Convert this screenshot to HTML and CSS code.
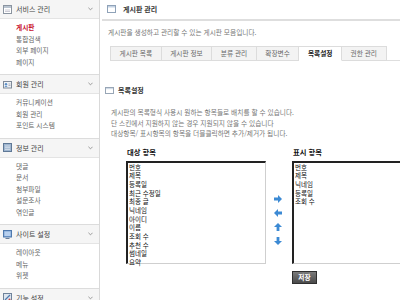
FILE: index.html
```html
<!DOCTYPE html>
<html lang="ko">
<head>
<meta charset="utf-8">
<title>게시판 관리</title>
<link rel="stylesheet" href="styles.css">
</head>
<body>
<div class="page">
  <aside class="sidebar">
    <section class="group first">
      <div class="group-head">
        <svg class="gi" viewBox="0 0 9 9"><rect x="0.5" y="0.5" width="8" height="8" fill="#fff" stroke="#8a94a0"/><rect x="1" y="1" width="7" height="2" fill="#b9c4d0"/><path d="M2 5h5M2 6.5h5" stroke="#aab" stroke-width="0.6"/></svg>
        <span class="gt">서비스 관리</span>
        <svg class="chev" viewBox="0 0 6 4"><path d="M0.5 0.5L3 3L5.5 0.5" fill="none" stroke="#888" stroke-width="1"/></svg>
      </div>
      <ul class="items">
        <li class="active">게시판</li>
        <li>통합검색</li>
        <li>외부 페이지</li>
        <li>페이지</li>
      </ul>
    </section>
    <section class="group">
      <div class="group-head">
        <svg class="gi" viewBox="0 0 9 9"><rect x="0.5" y="1.5" width="8" height="6.5" fill="#eef2f6" stroke="#7f8a99"/><circle cx="3" cy="4.2" r="1.2" fill="#5b8fc7"/><path d="M1.5 7c0.5-1.5 2.5-1.5 3 0" fill="#5b8fc7"/><path d="M5.5 4h2M5.5 5.5h2" stroke="#889" stroke-width="0.6"/></svg>
        <span class="gt">회원 관리</span>
        <svg class="chev" viewBox="0 0 6 4"><path d="M0.5 0.5L3 3L5.5 0.5" fill="none" stroke="#888" stroke-width="1"/></svg>
      </div>
      <ul class="items">
        <li>커뮤니케이션</li>
        <li>회원 관리</li>
        <li>포인트 시스템</li>
      </ul>
    </section>
    <section class="group">
      <div class="group-head">
        <svg class="gi" viewBox="0 0 9 9"><rect x="0.5" y="0.5" width="8" height="8" fill="#9fb6d0" stroke="#5f7896"/><path d="M2 3h5M2 4.7h5M2 6.4h5" stroke="#e8eef5" stroke-width="0.7"/></svg>
        <span class="gt">정보 관리</span>
        <svg class="chev" viewBox="0 0 6 4"><path d="M0.5 0.5L3 3L5.5 0.5" fill="none" stroke="#888" stroke-width="1"/></svg>
      </div>
      <ul class="items">
        <li>댓글</li>
        <li>문서</li>
        <li>첨부파일</li>
        <li>설문조사</li>
        <li>엮인글</li>
      </ul>
    </section>
    <section class="group">
      <div class="group-head">
        <svg class="gi" viewBox="0 0 9 9"><rect x="0.5" y="0.5" width="8" height="6.5" fill="#7fa6d6" stroke="#4f79ad"/><rect x="1.5" y="1.5" width="6" height="4.5" fill="#b8d0ee"/><path d="M2.5 8.5h4" stroke="#6b7f99" stroke-width="1"/></svg>
        <span class="gt">사이트 설정</span>
        <svg class="chev" viewBox="0 0 6 4"><path d="M0.5 0.5L3 3L5.5 0.5" fill="none" stroke="#888" stroke-width="1"/></svg>
      </div>
      <ul class="items">
        <li>레이아웃</li>
        <li>메뉴</li>
        <li>위젯</li>
      </ul>
    </section>
    <section class="group">
      <div class="group-head">
        <svg class="gi" viewBox="0 0 9 9"><rect x="0.5" y="0.5" width="8" height="8" fill="#dde6ef" stroke="#6f829a"/><path d="M2 7L7 2" stroke="#4f79ad" stroke-width="1.2"/><circle cx="6.5" cy="6.5" r="1" fill="#c44"/></svg>
        <span class="gt">기능 설정</span>
        <svg class="chev" viewBox="0 0 6 4"><path d="M0.5 0.5L3 3L5.5 0.5" fill="none" stroke="#888" stroke-width="1"/></svg>
      </div>
    </section>
  </aside>

  <main class="main">
    <div class="page-title">
      <svg class="ticon" viewBox="0 0 9 8"><rect x="0.5" y="0.5" width="8" height="7" fill="#fff" stroke="#8fa2b8"/><rect x="1" y="1" width="7" height="1.5" fill="#c3d2e3"/></svg>
      <h1>게시판 관리</h1>
    </div>
    <p class="desc">게시판을 생성하고 관리할 수 있는 게시판 모음입니다.</p>

    <ul class="tabs">
      <li>게시판 목록</li>
      <li>게시판 정보</li>
      <li>분류 관리</li>
      <li>확장변수</li>
      <li class="on">목록설정</li>
      <li>권한 관리</li>
    </ul>

    <div class="sec-title">
      <svg class="sicon" viewBox="0 0 9 7"><rect x="0.5" y="0.5" width="8" height="6" fill="#fff" stroke="#98a6b6"/><rect x="1" y="1" width="7" height="1.2" fill="#d0dae6"/></svg>
      <h2>목록설정</h2>
    </div>

    <div class="help">
      <p>게시판의 목록형식 사용시 원하는 항목들로 배치를 할 수 있습니다.</p>
      <p>단 스킨에서 지원하지 않는 경우 지원되지 않을 수 있습니다</p>
      <p>대상항목/ 표시항목의 항목을 더블클릭하면 추가/제거가 됩니다.</p>
    </div>

    <div class="lists">
      <div class="lab">대상 항목</div>
      <div></div>
      <div class="lab">표시 항목</div>

      <ul class="box">
        <li>번호</li>
        <li>제목</li>
        <li>등록일</li>
        <li>최근 수정일</li>
        <li>최종 글</li>
        <li>닉네임</li>
        <li>아이디</li>
        <li>이름</li>
        <li>조회 수</li>
        <li>추천 수</li>
        <li>썸네일</li>
        <li>요약</li>
      </ul>
      <div class="arrows">
        <svg class="arr" viewBox="0 0 8 8"><path d="M0 2.6H4V0L8 4L4 8V5.4H0Z" fill="#3c8ad4"/></svg>
        <svg class="arr" viewBox="0 0 8 8"><path d="M8 2.6H4V0L0 4L4 8V5.4H8Z" fill="#3c8ad4"/></svg>
        <svg class="arr" viewBox="0 0 8 8"><path d="M2.6 8V4H0L4 0L8 4H5.4V8Z" fill="#3c8ad4"/></svg>
        <svg class="arr" viewBox="0 0 8 8"><path d="M2.6 0V4H0L4 8L8 4H5.4V0Z" fill="#3c8ad4"/></svg>
      </div>
      <ul class="box">
        <li>번호</li>
        <li>제목</li>
        <li>닉네임</li>
        <li>등록일</li>
        <li>조회 수</li>
      </ul>

      <div></div>
      <div></div>
      <div><button class="save" type="button">저장</button></div>
    </div>
  </main>
</div>
</body>
</html>
```

FILE: styles.css
```css
* { box-sizing: border-box; }

html, body {
  margin: 0;
  padding: 0;
  background: #fff;
  overflow: hidden;
}

body {
  width: 400px;
  height: 300px;
  font-family: "Noto Sans CJK KR", "Noto Sans", sans-serif;
  font-size: 6.7px;
  color: #666;
}

ul { list-style: none; margin: 0; padding: 0; }
p, h1, h2 { margin: 0; }

.page {
  display: flex;
  align-items: flex-start;
  height: 300px;
}

/* ---------- sidebar ---------- */
.sidebar {
  width: 100px;
  flex: none;
  height: 300px;
  border-right: 1px solid #d9d9d9;
  overflow: hidden;
}

.group-head {
  display: flex;
  align-items: center;
  height: 20px;
  padding: 0 6px 0 3px;
  background: #f5f5f5;
  border-top: 1px solid #dcdcdc;
  border-bottom: 1px solid #e4e4e4;
}

.group.first .group-head {
  border-top: none;
  height: 19px;
}

.gi {
  width: 9px;
  height: 9px;
  flex: none;
}

.gt {
  margin-left: 4px;
  flex: 1;
  font-size: 7px;
  color: #444;
  line-height: 18px;
}

.chev {
  width: 5px;
  height: 4px;
  flex: none;
}

.items {
  padding: 3px 0 6px 16px;
}

.items li {
  line-height: 11.5px;
  height: 11.5px;
  color: #666;
}

.items li.active {
  color: #c8102e;
  font-weight: bold;
}

/* ---------- main ---------- */
.main {
  flex: 1;
  min-width: 0;
  overflow: hidden;
  white-space: nowrap;
}

.page-title {
  display: flex;
  align-items: center;
  height: 21px;
  margin-left: 2px;
  padding: 0 0 2px 5px;
  border-bottom: 2px solid #dedede;
}

.ticon {
  width: 9px;
  height: 8px;
  flex: none;
}

.page-title h1 {
  margin-left: 7px;
  font-size: 7px;
  font-weight: bold;
  color: #333;
  line-height: 12px;
}

.desc {
  margin-top: 6px;
  padding-left: 8px;
  line-height: 11px;
  color: #777;
}

.tabs {
  display: flex;
  margin: 8px 0 0 10px;
  border-bottom: 1px solid #dedede;
}

.tabs li {
  flex: none;
  height: 15px;
  line-height: 13px;
  padding: 0 8.5px;
  margin-bottom: -1px;
  background: #f3f3f3;
  border: 1px solid #dcdcdc;
  border-left: none;
  color: #666;
}

.tabs li:first-child {
  border-left: 1px solid #dcdcdc;
}

.tabs li.on {
  background: #fff;
  border-bottom-color: #fff;
  color: #222;
  font-weight: bold;
}

.sec-title {
  display: flex;
  align-items: center;
  margin-top: 23px;
  padding-left: 5px;
  height: 12px;
}

.sicon {
  width: 9px;
  height: 7px;
  flex: none;
}

.sec-title h2 {
  margin-left: 4px;
  font-size: 7px;
  font-weight: bold;
  color: #333;
}

.help {
  margin-top: 11px;
  padding-left: 11px;
  color: #777;
}

.help p {
  line-height: 10.5px;
}

.lists {
  display: grid;
  grid-template-columns: 140px 26px 140px;
  margin: 8px 0 0 26px;
}

.lab {
  font-size: 7.3px;
  font-weight: bold;
  color: #111;
  line-height: 10px;
  height: 14px;
  padding-left: 1px;
}

.box {
  height: 103px;
  border-top: 2px solid #222;
  border-left: 2px solid #222;
  border-right: 1px solid #cfcfcf;
  border-bottom: 1px solid #cfcfcf;
  padding: 0 0 0 1px;
  background: #fff;
}

.box li {
  font-size: 6.5px;
  line-height: 8.7px;
  height: 8.7px;
  color: #111;
}

.arrows {
  display: flex;
  flex-direction: column;
  align-items: center;
  gap: 6px;
  padding-top: 34px;
  padding-right: 3px;
}

.arr {
  width: 8px;
  height: 8px;
  display: block;
}

.save {
  margin-top: 7px;
  width: 25px;
  height: 13px;
  padding: 0;
  border: 1px solid #2f2f2f;
  background: linear-gradient(#7a7a7a, #4a4a4a);
  color: #fff;
  font-family: "Noto Sans CJK KR", "Noto Sans", sans-serif;
  font-size: 6.7px;
  font-weight: bold;
  line-height: 11px;
  display: block;
}
```
